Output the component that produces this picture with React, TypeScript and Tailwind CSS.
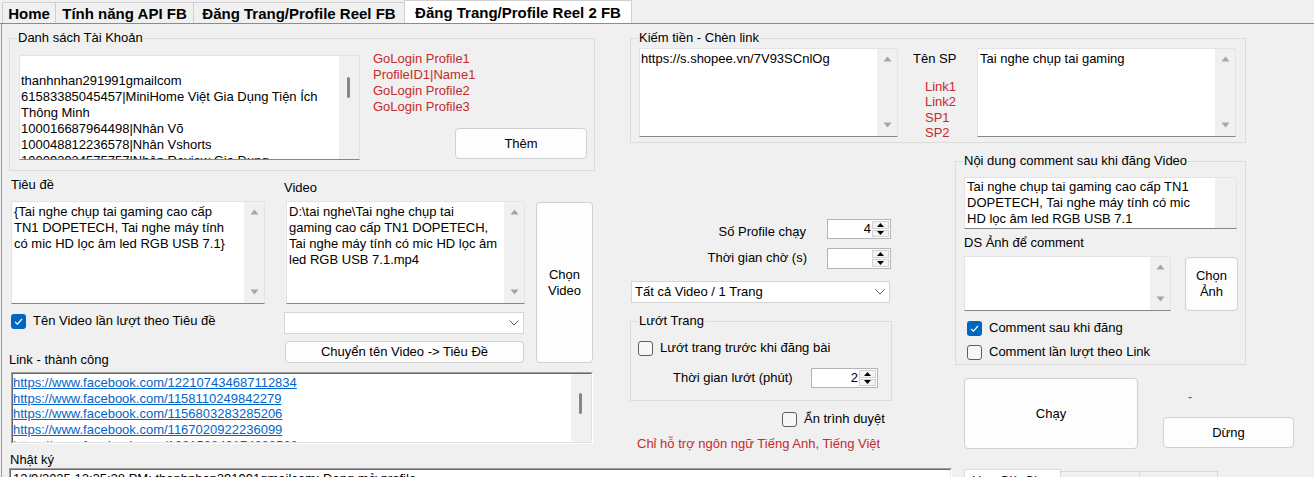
import React from "react";

// màu đỏ cho nhãn gợi ý / cảnh báo
const RED = "text-[#c42b2b]";

type Bar = "arrows" | "thumb" | "blank";

const UpArrow = ({ color = "#a6a6a6" }: { color?: string }) => (
  <svg width="9" height="6" viewBox="0 0 9 6">
    <path d="M4.5 0.5 L8.5 5.5 L0.5 5.5 Z" fill={color} />
  </svg>
);

const DownArrow = ({ color = "#a6a6a6" }: { color?: string }) => (
  <svg width="9" height="6" viewBox="0 0 9 6">
    <path d="M0.5 0.5 L8.5 0.5 L4.5 5.5 Z" fill={color} />
  </svg>
);

function ScrollStrip({ kind, thumbClass = "" }: { kind: Bar; thumbClass?: string }) {
  if (kind === "arrows") {
    return (
      <div className="flex w-[20px] shrink-0 flex-col items-center justify-between bg-[#f0f0f0] pt-[7px] pb-[8px]">
        <UpArrow />
        <DownArrow />
      </div>
    );
  }
  if (kind === "thumb") {
    return (
      <div className="w-[20px] shrink-0 bg-[#f0f0f0] pl-[8px]">
        <div className={`h-[21px] w-[3px] rounded-full bg-[#868686] ${thumbClass}`} />
      </div>
    );
  }
  return <div className="w-[21px] shrink-0 bg-[#f0f0f0]" />;
}

function TextBox({
  className = "",
  padClass = "",
  bar,
  thumbClass,
  lines,
}: {
  className?: string;
  padClass?: string;
  bar: Bar;
  thumbClass?: string;
  lines: string[];
}) {
  return (
    <div
      className={`flex shrink-0 overflow-hidden border border-[#e3e3e3] border-b-[#868686] bg-white ${className}`}
    >
      <div className={`min-w-0 flex-1 overflow-hidden whitespace-nowrap ${padClass}`}>
        {lines.map((l, i) => (
          <div key={i} className="h-[16px]">
            {l || "\u00a0"}
          </div>
        ))}
      </div>
      <ScrollStrip kind={bar} thumbClass={thumbClass} />
    </div>
  );
}

function Btn({ className = "", children }: { className?: string; children: React.ReactNode }) {
  return (
    <button
      className={`flex shrink-0 flex-col items-center justify-center rounded-[4px] border border-[#d0d0d0] bg-[#fdfdfd] leading-[16px] text-black ${className}`}
    >
      {children}
    </button>
  );
}

function Check({ on = false }: { on?: boolean }) {
  if (on) {
    return (
      <span className="flex size-[15px] shrink-0 items-center justify-center rounded-[3px] bg-[#0067c0]">
        <svg width="11" height="11" viewBox="0 0 11 11">
          <path d="M2 5.8 L4.4 8.2 L9 3" fill="none" stroke="#fff" strokeWidth="1.2" />
        </svg>
      </span>
    );
  }
  return <span className="size-[15px] shrink-0 rounded-[3px] border border-[#5f5f5f] bg-[#f7f7f7]" />;
}

function CheckRow({ on, label, className = "" }: { on?: boolean; label: string; className?: string }) {
  return (
    <div className={`flex h-[16px] items-center ${className}`}>
      <Check on={on} />
      <span className="ml-[7px] whitespace-nowrap">{label}</span>
    </div>
  );
}

function Spin({ value, className = "" }: { value?: string; className?: string }) {
  return (
    <div className={`flex shrink-0 border border-[#b4b4b4] bg-white ${className}`}>
      <div className="flex-1 pr-[1px] text-right leading-[18px]">{value}</div>
      <div className="flex w-[18px] flex-col gap-[1px] py-[1px] pr-[1px]">
        <span className="flex flex-1 items-center justify-center border border-[#d2d2d2] bg-[#f4f4f4]">
          <svg width="7" height="4" viewBox="0 0 7 4">
            <path d="M3.5 0 L7 4 L0 4 Z" fill="#000" />
          </svg>
        </span>
        <span className="flex flex-1 items-center justify-center border border-[#d2d2d2] bg-[#f4f4f4]">
          <svg width="7" height="4" viewBox="0 0 7 4">
            <path d="M0 0 L7 0 L3.5 4 Z" fill="#000" />
          </svg>
        </span>
      </div>
    </div>
  );
}

function Combo({ text = "", className = "" }: { text?: string; className?: string }) {
  return (
    <div className={`flex shrink-0 items-center border border-[#d5d5d5] bg-white pl-[3px] pr-[4px] ${className}`}>
      <span className="flex-1 truncate">{text}</span>
      <svg width="10" height="6" viewBox="0 0 10 6">
        <path d="M0.5 0.5 L5 5 L9.5 0.5" fill="none" stroke="#5c5c5c" />
      </svg>
    </div>
  );
}

function Group({
  title,
  className = "",
  children,
}: {
  title: string;
  className?: string;
  children: React.ReactNode;
}) {
  return (
    <fieldset className={`border border-[#dcdcdc] ${className}`}>
      <legend className="ml-[7px] px-[1px] leading-[16px] whitespace-nowrap">{title}</legend>
      {children}
    </fieldset>
  );
}

// RichTextBox kiểu viền lõm
function Sunken({ className = "", children }: { className?: string; children: React.ReactNode }) {
  return (
    <div className={`shrink-0 border border-[#a0a0a0] border-r-white border-b-white ${className}`}>
      <div className="flex h-full border border-[#696969] border-r-[#e3e3e3] border-b-[#e3e3e3] bg-white">
        {children}
      </div>
    </div>
  );
}

const accounts = [
  "",
  "thanhnhan291991gmailcom",
  "61583385045457|MiniHome Việt Gia Dụng Tiện Ích",
  "Thông Minh",
  "100016687964498|Nhân Võ",
  "100048812236578|Nhân Vshorts",
  "100093934575757|Nhân Review Gia Dụng",
];

const links = [
  "https://www.facebook.com/122107434687112834",
  "https://www.facebook.com/1158110249842279",
  "https://www.facebook.com/1156803283285206",
  "https://www.facebook.com/1167020922236099",
  "https://www.facebook.com/122153849174838568",
];

const tabs = [
  { label: "Home", w: "w-[53px]" },
  { label: "Tính năng API FB", w: "w-[138px]" },
  { label: "Đăng Trang/Profile Reel FB", w: "w-[211px]" },
];

export default function App() {
  return (
    <div className="h-[477px] w-[1314px] overflow-hidden bg-[#f0f0f0] font-['Liberation_Sans',Arial,sans-serif] text-[13px] leading-[16px] text-black">
      {/* tab header */}
      <div className="flex h-[24px] items-end border-b border-[#8c8c8c] pl-[2px]">
        {tabs.map((t) => (
          <div
            key={t.label}
            className={`h-[21px] border-t border-l border-[#d0d0d0] bg-[#f0f0f0] pt-[1px] text-center text-[15px] leading-[20px] font-bold whitespace-nowrap ${t.w}`}
          >
            {t.label}
          </div>
        ))}
        <div className="h-[23px] w-[228px] border-x border-t border-[#d0d0d0] bg-white pt-[2px] text-center text-[15px] leading-[20px] font-bold whitespace-nowrap">
          Đăng Trang/Profile Reel 2 FB
        </div>
      </div>

      <div className="ml-[1px] h-[453px] border-l border-[#9c9c9c]">
        <div className="grid grid-cols-[586px_35px_262px_63px_340px] items-start pt-[6px] pl-[7px]">
          {/* cột trái */}
          <div className="col-start-1 row-span-2 row-start-1 flex flex-col">
            <Group title="Danh sách Tài Khoản">
              <div className="flex pt-[9px] pb-[10px] pl-[9px]">
                <TextBox
                  className="h-[105px] w-[341px]"
                  padClass="pt-[1px] pl-[1px]"
                  bar="thumb"
                  thumbClass="mt-[21px]"
                  lines={accounts}
                />
                <div className="-mt-[4px] ml-[13px] flex w-[214px] flex-col">
                  <div className={RED}>GoLogin Profile1</div>
                  <div className={RED}>ProfileID1|Name1</div>
                  <div className={RED}>GoLogin Profile2</div>
                  <div className={RED}>GoLogin Profile3</div>
                  <Btn className="mt-auto mb-[1px] h-[31px] w-[132px] self-end">Thêm</Btn>
                </div>
              </div>
            </Group>

            <div className="mt-[6px] flex items-start">
              <div className="ml-[2px] flex w-[254px] flex-col">
                <div>Tiêu đề</div>
                <TextBox
                  className="mt-[8px] h-[103px] w-[254px]"
                  padClass="pt-[2px] pl-[2px]"
                  bar="arrows"
                  lines={[
                    "{Tai nghe chụp tai gaming cao cấp",
                    "TN1 DOPETECH, Tai nghe máy tính",
                    "có mic HD lọc âm led RGB USB 7.1}",
                  ]}
                />
                <CheckRow on label="Tên Video lần lượt theo Tiêu đề" className="mt-[9px]" />
                <div className="mt-[23px] -ml-[2px]">Link - thành công</div>
              </div>

              <div className="ml-[19px] flex w-[241px] flex-col">
                <div className="mt-[3px]">Video</div>
                <TextBox
                  className="mt-[5px] ml-[2px] h-[103px] w-[239px]"
                  padClass="pt-[2px] pl-[2px]"
                  bar="arrows"
                  lines={[
                    "D:\\tai nghe\\Tai nghe chụp tai",
                    "gaming cao cấp TN1 DOPETECH,",
                    "Tai nghe máy tính có mic HD lọc âm",
                    "led RGB USB 7.1.mp4",
                  ]}
                />
                <Combo className="mt-[8px] h-[22px] w-[240px]" />
                <Btn className="mt-[7px] ml-[1px] h-[22px] w-[239px]">Chuyển tên Video -&gt; Tiêu Đề</Btn>
              </div>

              <Btn className="mt-[25px] ml-[11px] h-[161px] w-[57px]">
                <span>Chọn</span>
                <span>Video</span>
              </Btn>
            </div>

            <Sunken className="mt-[4px] ml-[2px] h-[72px] w-[582px]">
              <div className="min-w-0 flex-1 overflow-hidden pt-[1px] whitespace-nowrap">
                {links.map((l) => (
                  <div key={l} className="h-[15.67px] leading-[15.67px] text-[#0066cc] underline">
                    {l}
                  </div>
                ))}
              </div>
              <ScrollStrip kind="thumb" thumbClass="mt-[19px]" />
            </Sunken>
          </div>

          {/* kiếm tiền */}
          <Group title="Kiếm tiền - Chèn link" className="col-span-3 col-start-3 row-start-1 w-[616px]">
            <div className="flex items-start pt-[2px] pb-[5px] pl-[8px]">
              <TextBox
                className="h-[89px] w-[259px]"
                padClass="pt-[2px] pl-[1px]"
                bar="arrows"
                lines={["https://s.shopee.vn/7V93SCnlOg"]}
              />
              <div className="ml-[15px] flex h-[89px] w-[64px] flex-col">
                <div className="mt-[3px]">Tên SP</div>
                <div className={`mt-[12px] ml-[12px] leading-[15.33px] ${RED}`}>
                  <div>Link1</div>
                  <div>Link2</div>
                  <div>SP1</div>
                  <div>SP2</div>
                </div>
              </div>
              <TextBox
                className="h-[89px] w-[259px]"
                padClass="pt-[2px] pl-[2px]"
                bar="arrows"
                lines={["Tai nghe chụp tai gaming"]}
              />
            </div>
          </Group>

          {/* cột giữa */}
          <div className="col-start-3 row-start-2 flex flex-col">
            <div className="mt-[76px] flex h-[20px] items-start justify-end">
              <span className="mt-[5px] mr-[21px] whitespace-nowrap">Số Profile chạy</span>
              <Spin value="4" className="mr-[1px] h-[20px] w-[64px]" />
            </div>
            <div className="mt-[9px] flex h-[20px] items-start justify-end">
              <span className="mt-[2px] mr-[20px] whitespace-nowrap">Thời gian chờ (s)</span>
              <Spin className="mr-[1px] h-[21px] w-[64px]" />
            </div>
            <Combo text="Tất cả Video / 1 Trang" className="mt-[13px] ml-[1px] h-[22px] w-[259px]" />

            <Group title="Lướt Trang" className="mt-[10px] w-[262px]">
              <div className="pt-[11px] pb-[12px] pl-[7px]">
                <CheckRow label="Lướt trang trước khi đăng bài" />
                <div className="mt-[12px] flex h-[20px] items-center">
                  <span className="ml-[35px] w-[138px] whitespace-nowrap">Thời gian lướt (phút)</span>
                  <Spin value="2" className="h-[20px] w-[67px]" />
                </div>
              </div>
            </Group>

            <CheckRow label="Ẩn trình duyệt" className="mt-[10px] ml-[152px]" />
            <div className={`mt-[9px] ml-[7px] whitespace-nowrap ${RED}`}>
              Chỉ hỗ trợ ngôn ngữ Tiếng Anh, Tiếng Việt
            </div>
          </div>

          {/* cột phải */}
          <div className="col-start-5 row-start-2 flex flex-col">
            <Group title="Nội dung comment sau khi đăng Video" className="mt-[10px] w-[291px]">
              <div className="pt-[8px] pb-[4px] pl-[8px]">
                <TextBox
                  className="h-[52px] w-[273px]"
                  padClass="pt-[1px] pl-[2px]"
                  bar="blank"
                  lines={[
                    "Tai nghe chụp tai gaming cao cấp TN1",
                    "DOPETECH, Tai nghe máy tính có mic",
                    "HD lọc âm led RGB USB 7.1",
                  ]}
                />
                <div className="mt-[6px]">DS Ảnh để comment</div>
                <div className="mt-[5px] flex items-start">
                  <TextBox className="h-[55px] w-[207px]" bar="arrows" lines={[""]} />
                  <Btn className="mt-[1px] ml-[14px] h-[54px] w-[53px]">
                    <span>Chọn</span>
                    <span>Ảnh</span>
                  </Btn>
                </div>
                <CheckRow on label="Comment sau khi đăng" className="mt-[9px] ml-[3px]" />
                <CheckRow label="Comment lần lượt theo Link" className="mt-[8px] ml-[3px]" />
              </div>
            </Group>

            <div className="mt-[13px] ml-[9px] flex items-start">
              <Btn className="h-[71px] w-[174px]">Chạy</Btn>
              <div className="ml-[25px] flex w-[131px] flex-col">
                <div className={`mt-[11px] ml-[25px] ${RED}`}>-</div>
                <Btn className="mt-[12px] h-[31px] w-[131px]">Dừng</Btn>
              </div>
            </div>
          </div>

          {/* nhật ký */}
          <div className="col-span-3 col-start-1 row-start-3 flex w-[943px] flex-col">
            <div className="ml-[1px]">Nhật ký</div>
            <Sunken className="h-[120px] w-[943px]">
              <div className="flex-1 pt-[1px] pl-[2px] whitespace-nowrap">
                12/9/2025 12:25:28 PM: thanhnhan291991gmailcom: Đang mở profile
              </div>
            </Sunken>
          </div>

          <div className="col-start-5 row-start-3 mt-[17px] ml-[9px] flex items-start">
            <div className="h-[24px] w-[97px] border-x border-t border-[#d9d9d9] bg-white pt-[3px] pl-[7px] whitespace-nowrap">
              Hẹn Giờ Chạy
            </div>
            <div className="mt-[2px] h-[22px] w-[79px] border-t border-r border-[#d9d9d9] pt-[3px] pl-[8px] whitespace-nowrap">
              Cài đặt
            </div>
            <div className="mt-[2px] h-[22px] w-[78px] border-t border-r border-[#d9d9d9] pt-[3px] pl-[8px] whitespace-nowrap">
              Lịch sử
            </div>
          </div>
        </div>
      </div>
    </div>
  );
}
